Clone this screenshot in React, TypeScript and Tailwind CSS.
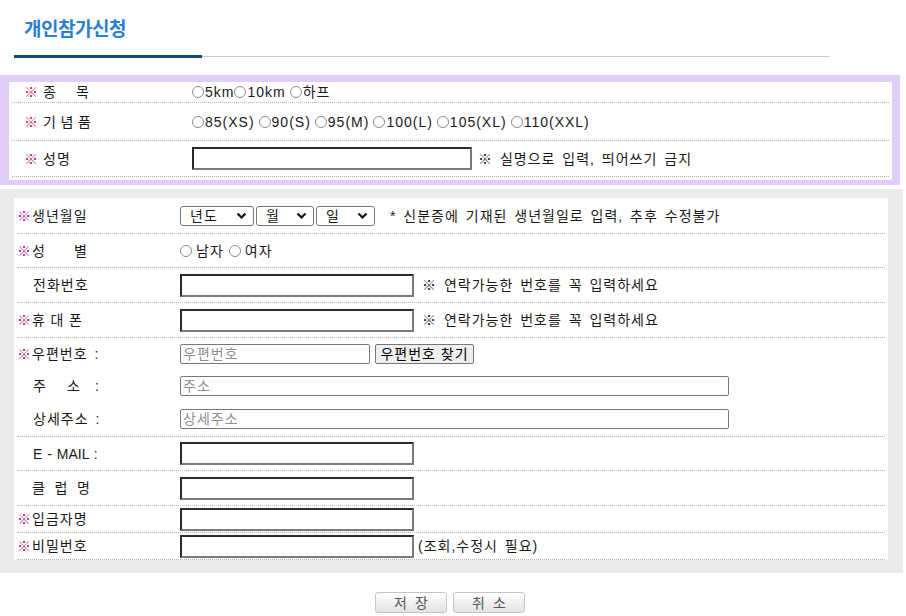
import React from 'react';

const FONT = "font-['Liberation_Sans','Noto_Sans_CJK_KR',sans-serif]";

function Radio({ label, gap = 'mr-[4px]' }: { label: string; gap?: string }) {
  return (
    <span className={`inline-flex items-center ${gap}`}>
      <span className="w-[12px] h-[12px] rounded-full border border-[#8c8c8c] bg-white mr-[1px]" />
      <span>{label}</span>
    </span>
  );
}

function Spread({ chars, w }: { chars: string[]; w: number }) {
  return (
    <span className="inline-flex justify-between" style={{ width: w }}>
      {chars.map((c, i) => (
        <span key={i}>{c}</span>
      ))}
    </span>
  );
}

function Inset({ w, h = 'h-[23px]' }: { w: string; h?: string }) {
  return (
    <div
      className={`${w} ${h} bg-white border-2 border-t-[#2a2a2a] border-l-[#2a2a2a] border-r-[#7a7a7a] border-b-[#7a7a7a]`}
    />
  );
}

function Plain({ w, placeholder }: { w: string; placeholder: string }) {
  return (
    <div className={`${w} h-[20px] bg-white border border-[#767676] rounded-[2px] flex items-center pl-[2px] text-[#8f8f8f]`}>
      {placeholder}
    </div>
  );
}

function Select({ label, w }: { label: string; w: string }) {
  return (
    <div className={`${w} h-[20px] bg-white border border-[#767676] rounded-[3px] flex items-center justify-between pl-[9px] pr-[6px]`}>
      <span>{label}</span>
      <svg width="11" height="8" viewBox="0 0 11 8">
        <path d="M1.5 1.5 L5.5 5.5 L9.5 1.5" fill="none" stroke="#111" strokeWidth="2.2" />
      </svg>
    </div>
  );
}

function PRow({ label, h, children }: { label: React.ReactNode; h: string; children?: React.ReactNode }) {
  return (
    <div className={`flex items-center ${h} border-b border-dotted border-[#b4b4b4] mx-[3px]`}>
      <div className="w-[180px] flex items-center pl-[12px]">
        <span className="w-[19px] text-[#b8175a] text-[14px] font-bold tracking-normal">※</span>
        {label}
      </div>
      <div className="flex items-center">{children}</div>
    </div>
  );
}

function GRow({
  label,
  req,
  h,
  dotted = true,
  children,
}: {
  label: React.ReactNode;
  req?: boolean;
  h: string;
  dotted?: boolean;
  children?: React.ReactNode;
}) {
  return (
    <div className={`flex items-center ${h} mx-[3px] ${dotted ? 'border-b border-dotted border-[#b4b4b4]' : ''}`}>
      <div className="w-[163px] flex items-center">
        <span className="w-[15px] text-[#a3177f] text-[14px] font-bold tracking-normal">{req ? '※' : ''}</span>
        {label}
      </div>
      <div className="flex items-center">{children}</div>
    </div>
  );
}

export default function App() {
  return (
    <div className={`w-[906px] h-[616px] bg-white text-[14px] text-[#1a1a1a] leading-none ${FONT} tracking-[1px] [word-spacing:2px]`}>
      {/* title */}
      <div className="pt-[19px] pl-[24px] h-[40px]">
        <h1 className="text-[19px] leading-[22px] font-bold text-[#2b7fd1] tracking-[-0.5px]">개인참가신청</h1>
      </div>
      <div className="flex items-center mt-[15px] ml-[14px] w-[815px] h-[3px]">
        <div className="w-[188px] h-[3px] bg-[#0e4b78]" />
        <div className="flex-1 h-[1px] bg-[#c9c9c9]" />
      </div>

      {/* event / souvenir / name */}
      <div className="mt-[17px] w-[900px] h-[110px] border-t-[7px] border-b-[5px] border-l-[9px] border-r-[8px] border-[#e2cdfa] bg-white">
        <PRow label={<Spread chars={['종', '목']} w={47} />} h="h-[21px]">
          <Radio label="5km" gap="" />
          <Radio label="10km" />
          <Radio label="하프" />
        </PRow>
        <PRow label={<Spread chars={['기', '념', '품']} w={49} />} h="h-[38px]">
          <Radio label="85(XS)" />
          <Radio label="90(S)" />
          <Radio label="95(M)" />
          <Radio label="100(L)" />
          <Radio label="105(XL)" />
          <Radio label="110(XXL)" />
        </PRow>
        <PRow label={<span>성명</span>} h="h-[36px]">
          <Inset w="w-[280px]" />
          <span className="ml-[6px]">※ 실명으로 입력, 띄어쓰기 금지</span>
        </PRow>
      </div>

      {/* personal info */}
      <div className="mt-[4px] w-[903px] h-[384px] bg-[#ebebeb] pt-[9px] pb-[13px] pl-[14px] pr-[15px]">
        <div className="bg-white h-full">
          <GRow req label={<span>생년월일</span>} h="h-[36px]">
            <div className="flex gap-[2px]">
              <Select label="년도" w="w-[74px]" />
              <Select label="월" w="w-[58px]" />
              <Select label="일" w="w-[59px]" />
            </div>
            <span className="ml-[15px]">* 신분증에 기재된 생년월일로 입력, 추후 수정불가</span>
          </GRow>
          <GRow req label={<Spread chars={['성', '별']} w={56} />} h="h-[34px]">
            <Radio label="남자" gap="mr-[5px] [&>span:last-child]:ml-[3px]" />
            <Radio label="여자" gap="[&>span:last-child]:ml-[3px]" />
          </GRow>
          <GRow label={<span className="pl-[1px]">전화번호</span>} h="h-[35px]">
            <Inset w="w-[234px]" />
            <span className="ml-[8px]">※ 연락가능한 번호를 꼭 입력하세요</span>
          </GRow>
          <GRow req label={<Spread chars={['휴', '대', '폰']} w={51} />} h="h-[35px]">
            <Inset w="w-[234px]" />
            <span className="ml-[8px]">※ 연락가능한 번호를 꼭 입력하세요</span>
          </GRow>
          <GRow req label={<span>우편번호 :</span>} h="h-[32px]" dotted={false}>
            <Plain w="w-[190px]" placeholder="우편번호" />
            <button className="ml-[5px] h-[20px] w-[99px] bg-[#efefef] border border-[#767676] rounded-[2px] text-[14px] font-normal text-black">
              우편번호 찾기
            </button>
          </GRow>
          <GRow
            label={
              <span className="pl-[1px] flex">
                <Spread chars={['주', '소']} w={48} />
                <span className="ml-[14px]">:</span>
              </span>
            }
            h="h-[32px]"
            dotted={false}
          >
            <Plain w="w-[549px]" placeholder="주소" />
          </GRow>
          <GRow label={<span className="pl-[1px]">상세주소 :</span>} h="h-[35px]">
            <Plain w="w-[549px]" placeholder="상세주소" />
          </GRow>
          <GRow label={<span className="pl-[1px] tracking-normal [word-spacing:1px]">E - MAIL :</span>} h="h-[34px]">
            <Inset w="w-[234px]" />
          </GRow>
          <GRow label={<Spread chars={['클', '럽', '명']} w={59} />} h="h-[35px]">
            <Inset w="w-[234px]" />
          </GRow>
          <GRow req label={<span>입금자명</span>} h="h-[27px]">
            <Inset w="w-[234px]" />
          </GRow>
          <GRow req label={<span>비밀번호</span>} h="h-[27px]">
            <Inset w="w-[234px]" />
            <span className="ml-[4px]">(조회,수정시 필요)</span>
          </GRow>
        </div>
      </div>

      {/* buttons */}
      <div className="flex justify-center gap-[6px] mt-[19px] pr-[6px]">
        <button className="w-[72px] h-[21px] rounded-[3px] border border-[#c4c4c4] bg-gradient-to-b from-white to-[#e2e2e2] text-[14px] text-[#555] tracking-[8px] pl-[8px]">
          저장
        </button>
        <button className="w-[72px] h-[21px] rounded-[3px] border border-[#c4c4c4] bg-gradient-to-b from-white to-[#e2e2e2] text-[14px] text-[#555] tracking-[8px] pl-[8px]">
          취소
        </button>
      </div>
    </div>
  );
}
